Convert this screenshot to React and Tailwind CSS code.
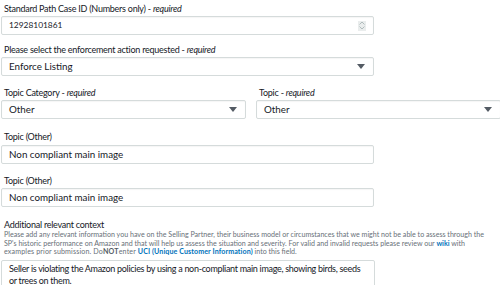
import React from "react";

const font = { fontFamily: "Lato, 'Liberation Sans', sans-serif" };

function Label({ text, required, className = "" }) {
  return (
    <div className={`h-[13px] pl-[3px] text-[9px] tracking-[-0.25px] leading-[13px] text-[#16191f] whitespace-nowrap ${className}`}>
      {text}
      {required && (
        <span>
          {" "}- <i>required</i>
        </span>
      )}
    </div>
  );
}

function Box({ value, width = "w-[373px]", textSize = "text-[9.8px]", children }) {
  return (
    <div
      className={`${width} h-[19px] mt-[1px] flex items-center justify-between rounded-[2px] border border-[#d5dbdb] bg-white pl-[7px] pr-[7px] ${textSize} text-[#16191f] shadow-[inset_0_1px_1px_rgba(0,0,0,0.04)]`}
    >
      <span className="whitespace-nowrap">{value}</span>
      {children}
    </div>
  );
}

function Caret() {
  return (
    <svg width="8" height="5" viewBox="0 0 8 5" className="mr-[1px]">
      <path d="M0 0 H8 L4 5 Z" fill="#545b64" />
    </svg>
  );
}

function Spinner() {
  return (
    <div className="w-[8px] h-[10px] bg-[#eaeded] flex flex-col items-center justify-center gap-[1px]">
      <svg width="6" height="4" viewBox="0 0 6 4">
        <path d="M0.5 3.5 L3 1 L5.5 3.5" fill="none" stroke="#aab7b8" strokeWidth="0.9" />
      </svg>
      <svg width="6" height="4" viewBox="0 0 6 4">
        <path d="M0.5 0.5 L3 3 L5.5 0.5" fill="none" stroke="#aab7b8" strokeWidth="0.9" />
      </svg>
    </div>
  );
}

export default function App() {
  return (
    <div className="w-[500px] h-[285px] overflow-hidden bg-white pt-[2px] pl-[1px]" style={font}>
      <div className="mb-[8px]">
        <Label text="Standard Path Case ID (Numbers only)" required />
        <Box value="12928101861" textSize="text-[8.4px]">
          <Spinner />
        </Box>
      </div>

      <div className="mb-[10px]">
        <Label text="Please select the enforcement action requested" required />
        <Box value="Enforce Listing">
          <Caret />
        </Box>
      </div>

      <div className="mb-[11px] flex gap-[10px] w-[520px]">
        <div>
          <Label text="Topic Category" required />
          <Box value="Other" width="w-[245px]">
            <Caret />
          </Box>
        </div>
        <div>
          <Label text="Topic" required className="pl-[1px]" />
          <Box value="Other" width="w-[245px]">
            <Caret />
          </Box>
        </div>
      </div>

      <div className="mb-[10px]">
        <Label text="Topic (Other)" className="h-[14px] leading-[14px]" />
        <Box value="Non compliant main image" />
      </div>

      <div className="mb-[11px]">
        <Label text="Topic (Other)" />
        <Box value="Non compliant main image" />
      </div>

      <div>
        <Label text="Additional relevant context" className="h-[11px] leading-[11px] text-[9.4px]" />
        <p className="pl-[3px] text-[7.1px] leading-[8.5px] text-[#687078] whitespace-nowrap">
          Please add any relevant information you have on the Selling Partner, their business model or circumstances that we might not be able to assess through the
          <br />
          SP's historic performance on Amazon and that will help us assess the situation and severity. For valid and invalid requests please review our{" "}
          <a className="font-bold text-[#0073bb]">wiki</a> with
          <br />
          <span className="tracking-[0.15px]">
            examples prior submission. Do<b className="text-[#545b64]">NOT</b>enter{" "}
          </span>
          <a className="font-bold text-[#0073bb] tracking-[0.1px]">UCI (Unique Customer Information)</a> into this field.
        </p>
        <div className="w-[374px] h-[40px] mt-[3px] rounded-[2px] border border-[#d5dbdb] bg-white px-[7px] pt-[2px] text-[9px] tracking-[-0.3px] leading-[12px] text-[#16191f] whitespace-nowrap">
          Seller is violating the Amazon policies by using a non-compliant main image, showing birds, seeds
          <br />
          or trees on them.
        </div>
      </div>
    </div>
  );
}
